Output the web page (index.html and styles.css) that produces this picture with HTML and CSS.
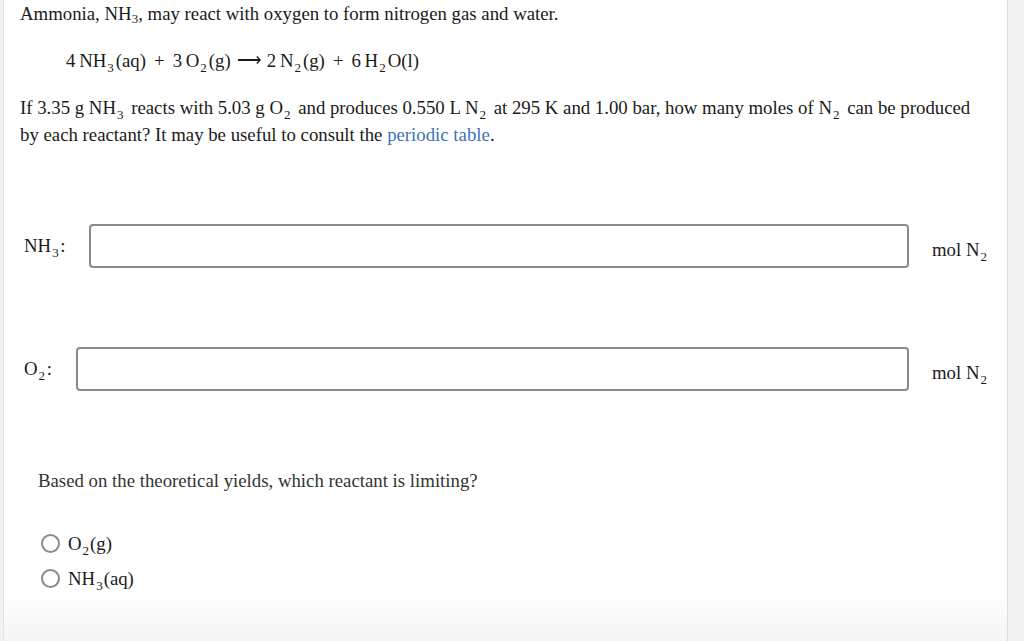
FILE: index.html
```html
<!DOCTYPE html>
<html>
<head>
<meta charset="utf-8">
<link rel="stylesheet" href="styles.css">
</head>
<body>
<div class="page">
  <div class="panel">
    <p class="intro">Ammonia, NH<sub class="s1">3</sub>, may react with oxygen to form nitrogen gas and water.</p>
    <p class="equation">4&#8201;NH<sub>3</sub>(aq)<span class="op">+</span>3&#8201;O<sub>2</sub>(g)<span class="arrow">&#10230;</span>2&#8201;N<sub>2</sub>(g)<span class="op">+</span>6&#8201;H<sub>2</sub>O(l)</p>
    <p class="question">If 3.35 g NH<sub class="sp">3</sub> reacts with 5.03 g O<sub class="sp">2</sub> and produces 0.550 L N<sub class="sp">2</sub> at 295 K and 1.00 bar, how many moles of N<sub class="sp">2</sub> can be produced by each reactant? It may be useful to consult the <a class="link" href="#">periodic table</a>.</p>

    <div class="answer-row row-nh3">
      <span class="label label-nh3">NH<sub>3</sub>&#8202;:</span>
      <span class="field"></span>
      <span class="unit">mol N<sub>2</sub></span>
    </div>
    <div class="answer-row row-o2">
      <span class="label label-o2">O<sub>2</sub>&#8202;:</span>
      <span class="field"></span>
      <span class="unit">mol N<sub>2</sub></span>
    </div>

    <p class="prompt">Based on the theoretical yields, which reactant is limiting?</p>
    <div class="options">
      <label class="option"><span class="radio"></span><span>O<sub class="opt">2</sub>(g)</span></label>
      <label class="option"><span class="radio"></span><span>NH<sub class="opt">3</sub>(aq)</span></label>
    </div>
  </div>
  <div class="side"></div>
</div>
</body>
</html>
```

FILE: styles.css
```css
html, body {
  margin: 0;
  padding: 0;
  height: 100%;
}
body {
  font-family: "Liberation Serif", "Times New Roman", serif;
  font-size: 18.8px;
  color: #1a1a1a;
  background: #f2f2f2;
}
.page {
  display: flex;
  height: 641px;
  overflow: hidden;
}
.panel {
  width: 1005px;
  margin-left: 3px;
  border-left: 1px solid #e2e2e2;
  border-right: 1px solid #dcdcdc;
  background: linear-gradient(to bottom, #ffffff 0, #ffffff 590px, #f5f5f5 641px);
  padding: 0 19px 0 16px;
  box-sizing: border-box;
}
.side {
  flex: 1;
  background: #f2f2f2;
}
p { margin: 0; }
sub {
  font-size: 13px;
  vertical-align: -5px;
  line-height: 0;
  margin-left: 1px;
}
sub.s1 { vertical-align: -3px; margin-left: 0; }
sub.sp { margin-right: 3px; }
sub.opt { margin-right: 1px; }
.intro {
  padding-top: 2px;
  line-height: 24px;
}
.equation {
  margin-top: 23px;
  padding-left: 46px;
  line-height: 24px;
}
.equation sub { margin-right: 2px; }
.op {
  margin: 0 8px;
}
.arrow {
  font-size: 17px;
  margin: 0 6px;
  position: relative;
  top: -1px;
}
.question {
  margin-top: 20px;
  line-height: 27px;
}
.link {
  color: #3a73b8;
  text-decoration: none;
}
.answer-row {
  display: flex;
  align-items: center;
  padding-left: 4px;
}
.row-nh3 { margin-top: 76px; }
.row-o2 { margin-top: 79px; }
.label {
  white-space: nowrap;
}
.label-nh3 { width: 65px; }
.label-o2 { width: 52px; }
.field {
  flex: 1;
  height: 44px;
  border: 2px solid #8a8a8a;
  border-radius: 4px;
  box-sizing: border-box;
  background: #fff;
}
.unit {
  margin-left: 23px;
  white-space: nowrap;
  width: 56px;
  position: relative;
  top: 4px;
}
.prompt {
  margin-top: 78px;
  padding-left: 18px;
  line-height: 24px;
  color: #333;
}
.options {
  margin-top: 39px;
  padding-left: 21px;
  display: flex;
  flex-direction: column;
  gap: 12px;
}
.option {
  display: flex;
  align-items: center;
  gap: 8px;
  line-height: 23px;
}
.radio {
  width: 19px;
  height: 19px;
  border: 2px solid #8a8a8a;
  border-radius: 50%;
  box-sizing: border-box;
  display: inline-block;
}
```
